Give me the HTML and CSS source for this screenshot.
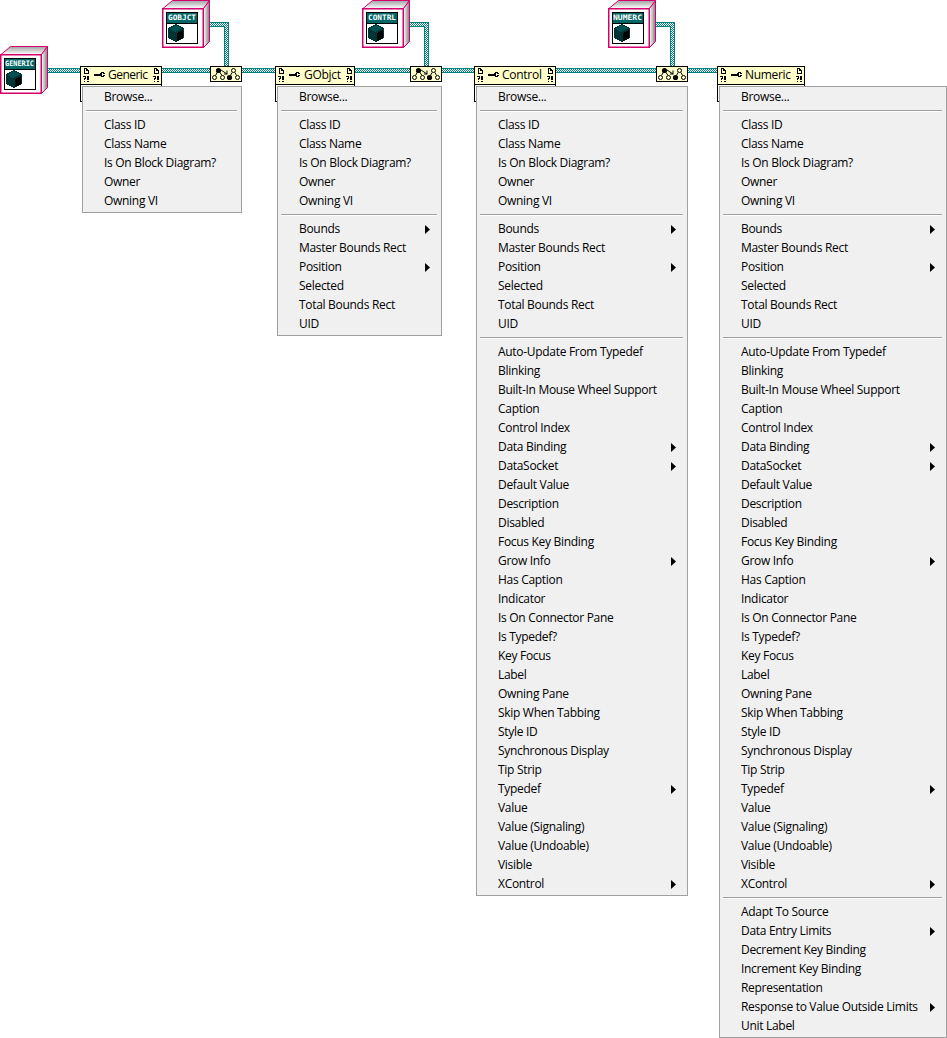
FILE: index.html
```
<!DOCTYPE html>
<html lang="en">
<head>
<meta charset="utf-8">
<title>Property node hierarchy</title>
<link rel="stylesheet" href="styles.css">
</head>
<body>
<svg class="diagram" width="947" height="104" viewBox="0 0 947 104">
  <defs>
    <pattern id="weave" width="2" height="2" patternUnits="userSpaceOnUse"><rect width="2" height="2" fill="#fff"/><path d="M0 0h1v1H0zM1 1h1v1H1z" fill="#008080"/></pattern>
    <linearGradient id="topShade" x1="0" y1="0" x2="0" y2="1"><stop offset="0" stop-color="#a0a0a0"/><stop offset="1" stop-color="#fff"/></linearGradient>
    <linearGradient id="sideShade"><stop offset="0" stop-color="#fff"/><stop offset="1" stop-color="#7c7c7c"/></linearGradient>
    <g id="card">
      <path d="M1 8.500L10.500.5H47.500L41.500 8.500z" fill="url(#topShade)" stroke="#d6006c"/>
      <path d="M41.500 8.500L47.500 .5V41.500L41.500 47.500z" fill="url(#sideShade)" stroke="#d6006c"/>
      <rect x=".75" y="8.750" width="40.500" height="38.500" fill="#fff" stroke="#d6006c" stroke-width="1.500"/>
      <g shape-rendering="crispEdges">
        <rect x="4.500" y="12.500" width="31" height="31" fill="#fff" stroke="#000"/>
        <rect x="5" y="13" width="30" height="10" fill="#006666"/>
        <path d="M5 23h30v1H5z"/>
        <path d="M13 24h2v1h2v1h2v1h2v1h1v10h-1v1h-2v1h-2v1h-2v1h-2v-1h-2v-1h-2v-1h-2v-1H6V28h1v-1h2v-1h2v-1h2z" fill="#003333"/>
        <path d="M13 25h2v1h2v1h2v1h1v1h-2v1h-2v1h-2v1h-2v-1h-2v-1H9v-1H8v-1h1v-1h2v-1h2z" fill="#005050"/>
        <path d="M15 33h1v-1h2v-1h2v-1h1v8h-1v1h-2v1h-2v1h-1z"/>
      </g>
    </g>
    <g id="marks" shape-rendering="crispEdges">
      <path d="M0 0h3v1H1v4h3V3H2V1h2v1h1v4H0z"/>
      <path d="M-1 8h2v1h-2zM1 8h1v3H1zM0 10h1v2H0zM0 13h1v1H0zM3 8h2v4H3zM3 13h2v1H3z"/>
    </g>
    <g id="key" shape-rendering="crispEdges"><path d="M0 2h6V1h1V0h3v1h1v1h-2V1H8v3h1V3h2v1h-1v1H7V4H0z"/></g>
    <g id="cast">
      <rect x=".5" y=".5" width="31" height="15" fill="#ffffcc" stroke="#000" shape-rendering="crispEdges"/>
      <path d="M7.500 6L5.500 9.500M10 6.500L12 9.500M11 4L17 8M22 6.500L20.500 9.500M25 6.500L26.500 9.500" fill="none" stroke="#000"/>
      <path d="M17.500 4.500V8.500H14v-1h2.500v-3z"/>
      <circle cx="8.500" cy="4.500" r="2.600"/><circle cx="19.500" cy="11.500" r="2.600"/>
      <g fill="#ffffcc" stroke="#000"><circle cx="23.500" cy="4.500" r="2"/><circle cx="4.500" cy="11.500" r="2"/><circle cx="12.500" cy="11.500" r="2"/><circle cx="27.500" cy="11.500" r="2"/></g>
    </g>
  </defs>

  <g class="wires" shape-rendering="crispEdges">
    <path fill="#008080" d="M48 68h669v5H48z"/><path fill="url(#weave)" d="M48 69h669v3H48z"/>
    <path fill="#008080" d="M210 22h19v46h-5V27h-14zM410 22h19v46h-5V27h-14zM656 22h19v46h-5V27h-14z"/>
    <path fill="url(#weave)" d="M210 23h18v45h-3V26h-15zM410 23h18v45h-3V26h-15zM656 23h18v45h-3V26h-15z"/>
  </g>

  <use href="#card" x="0" y="46"/><use href="#card" x="162"/><use href="#card" x="362"/><use href="#card" x="608"/>
  <g class="card-name">
    <text x="5" y="66" textLength="29" lengthAdjust="spacingAndGlyphs">GENERIC</text>
    <text x="168" y="20" textLength="28" lengthAdjust="spacingAndGlyphs">GOBJCT</text>
    <text x="368" y="20" textLength="28" lengthAdjust="spacingAndGlyphs">CONTRL</text>
    <text x="613" y="20" textLength="29" lengthAdjust="spacingAndGlyphs">NUMERC</text>
  </g>
  <use href="#cast" x="210" y="66"/><use href="#cast" x="410" y="66"/><use href="#cast" x="656" y="66"/>

  <g class="node-box" shape-rendering="crispEdges">
    <path class="node-tail" d="M80.500 84.500v17h81v-17zM275.500 84.500v17h79v-17zM474.500 84.500v17h81v-17zM717.500 84.500v17h87v-17z"/>
    <path class="node-head" d="M80.500 66.500h81v18h-81zM275.500 66.500h79v18h-79zM474.500 66.500h81v18h-81zM717.500 66.500h87v18h-87z"/>
  </g>
  <use href="#marks" x="84" y="68"/><use href="#marks" x="154" y="68"/><use href="#key" x="94" y="72"/>
  <use href="#marks" x="279" y="68"/><use href="#marks" x="347" y="68"/><use href="#key" x="289" y="72"/>
  <use href="#marks" x="478" y="68"/><use href="#marks" x="548" y="68"/><use href="#key" x="488" y="72"/>
  <use href="#marks" x="721" y="68"/><use href="#marks" x="797" y="68"/><use href="#key" x="731" y="72"/>
  <g class="node-name">
    <text x="108" y="79" textLength="40">Generic</text>
    <text x="304" y="79" textLength="37">GObjct</text>
    <text x="502" y="79" textLength="40">Control</text>
    <text x="745" y="79" textLength="46">Numeric</text>
  </g>
</svg>

<main class="menus">
<ul class="menu menu-generic">
<li>Browse...</li><li class="sep"></li>
<li>Class ID</li><li>Class Name</li><li>Is On Block Diagram?</li><li>Owner</li><li>Owning VI</li>
</ul>
<ul class="menu menu-gobject">
<li>Browse...</li><li class="sep"></li>
<li>Class ID</li><li>Class Name</li><li>Is On Block Diagram?</li><li>Owner</li><li>Owning VI</li><li class="sep"></li>
<li class="sub">Bounds</li><li>Master Bounds Rect</li><li class="sub">Position</li><li>Selected</li><li>Total Bounds Rect</li><li>UID</li>
</ul>
<ul class="menu menu-control">
<li>Browse...</li><li class="sep"></li>
<li>Class ID</li><li>Class Name</li><li>Is On Block Diagram?</li><li>Owner</li><li>Owning VI</li><li class="sep"></li>
<li class="sub">Bounds</li><li>Master Bounds Rect</li><li class="sub">Position</li><li>Selected</li><li>Total Bounds Rect</li><li>UID</li><li class="sep"></li>
<li>Auto-Update From Typedef</li><li>Blinking</li><li>Built-In Mouse Wheel Support</li><li>Caption</li><li>Control Index</li><li class="sub">Data Binding</li><li class="sub">DataSocket</li><li>Default Value</li><li>Description</li><li>Disabled</li><li>Focus Key Binding</li><li class="sub">Grow Info</li><li>Has Caption</li><li>Indicator</li><li>Is On Connector Pane</li><li>Is Typedef?</li><li>Key Focus</li><li>Label</li><li>Owning Pane</li><li>Skip When Tabbing</li><li>Style ID</li><li>Synchronous Display</li><li>Tip Strip</li><li class="sub">Typedef</li><li>Value</li><li>Value (Signaling)</li><li>Value (Undoable)</li><li>Visible</li><li class="sub">XControl</li>
</ul>
<ul class="menu menu-numeric">
<li>Browse...</li><li class="sep"></li>
<li>Class ID</li><li>Class Name</li><li>Is On Block Diagram?</li><li>Owner</li><li>Owning VI</li><li class="sep"></li>
<li class="sub">Bounds</li><li>Master Bounds Rect</li><li class="sub">Position</li><li>Selected</li><li>Total Bounds Rect</li><li>UID</li><li class="sep"></li>
<li>Auto-Update From Typedef</li><li>Blinking</li><li>Built-In Mouse Wheel Support</li><li>Caption</li><li>Control Index</li><li class="sub">Data Binding</li><li class="sub">DataSocket</li><li>Default Value</li><li>Description</li><li>Disabled</li><li>Focus Key Binding</li><li class="sub">Grow Info</li><li>Has Caption</li><li>Indicator</li><li>Is On Connector Pane</li><li>Is Typedef?</li><li>Key Focus</li><li>Label</li><li>Owning Pane</li><li>Skip When Tabbing</li><li>Style ID</li><li>Synchronous Display</li><li>Tip Strip</li><li class="sub">Typedef</li><li>Value</li><li>Value (Signaling)</li><li>Value (Undoable)</li><li>Visible</li><li class="sub">XControl</li><li class="sep"></li>
<li>Adapt To Source</li><li class="sub">Data Entry Limits</li><li>Decrement Key Binding</li><li>Increment Key Binding</li><li>Representation</li><li class="sub">Response to Value Outside Limits</li><li>Unit Label</li>
</ul>
</main>
</body>
</html>
```
FILE: styles.css
```
* { box-sizing: border-box; }
body {
  position: relative;
  margin: 0;
  width: 947px;
  height: 1038px;
  overflow: hidden;
  background: #fff;
  color: #000;
  font: 12px "Open Sans", "Noto Sans", sans-serif;
}
.diagram { position: absolute; top: 0; left: 0; }
.card-name { font: bold 7.5px "DejaVu Sans Mono", monospace; fill: #fff; }
.node-name { font-size: 12px; }
.node-box { stroke: #000; }
.node-tail { fill: #fff; }
.node-head { fill: #ffffcc; }
.menus {
  position: relative;
  display: flex;
  align-items: flex-start;
  padding: 86px 0 0 82px;
}
.menu {
  flex: none;
  margin: 0;
  padding: 1px 0;
  border: 1px solid #a0a0a0;
  background: #f0f0f0;
  list-style: none;
  letter-spacing: -0.3px;
}
.menu-generic { width: 160px; margin-right: 35px; }
.menu-gobject { width: 165px; margin-right: 34px; }
.menu-control { width: 212px; margin-right: 31px; }
.menu-numeric { width: 228px; }
.menu li {
  display: flex;
  align-items: center;
  justify-content: space-between;
  height: 19px;
  padding: 0 11px 2px 21px;
  line-height: 19px;
  white-space: nowrap;
}
.menu .sub::after {
  content: "";
  width: 5px;
  height: 9px;
  margin-bottom: -2px;
  background: #000;
  clip-path: polygon(0 0, 100% 50%, 0 100%);
}
.menu .sep {
  height: 2px;
  margin: 3px 4px 4px 3px;
  padding: 0;
  border-top: 1px solid #a0a0a0;
  background: #fff;
}
```
